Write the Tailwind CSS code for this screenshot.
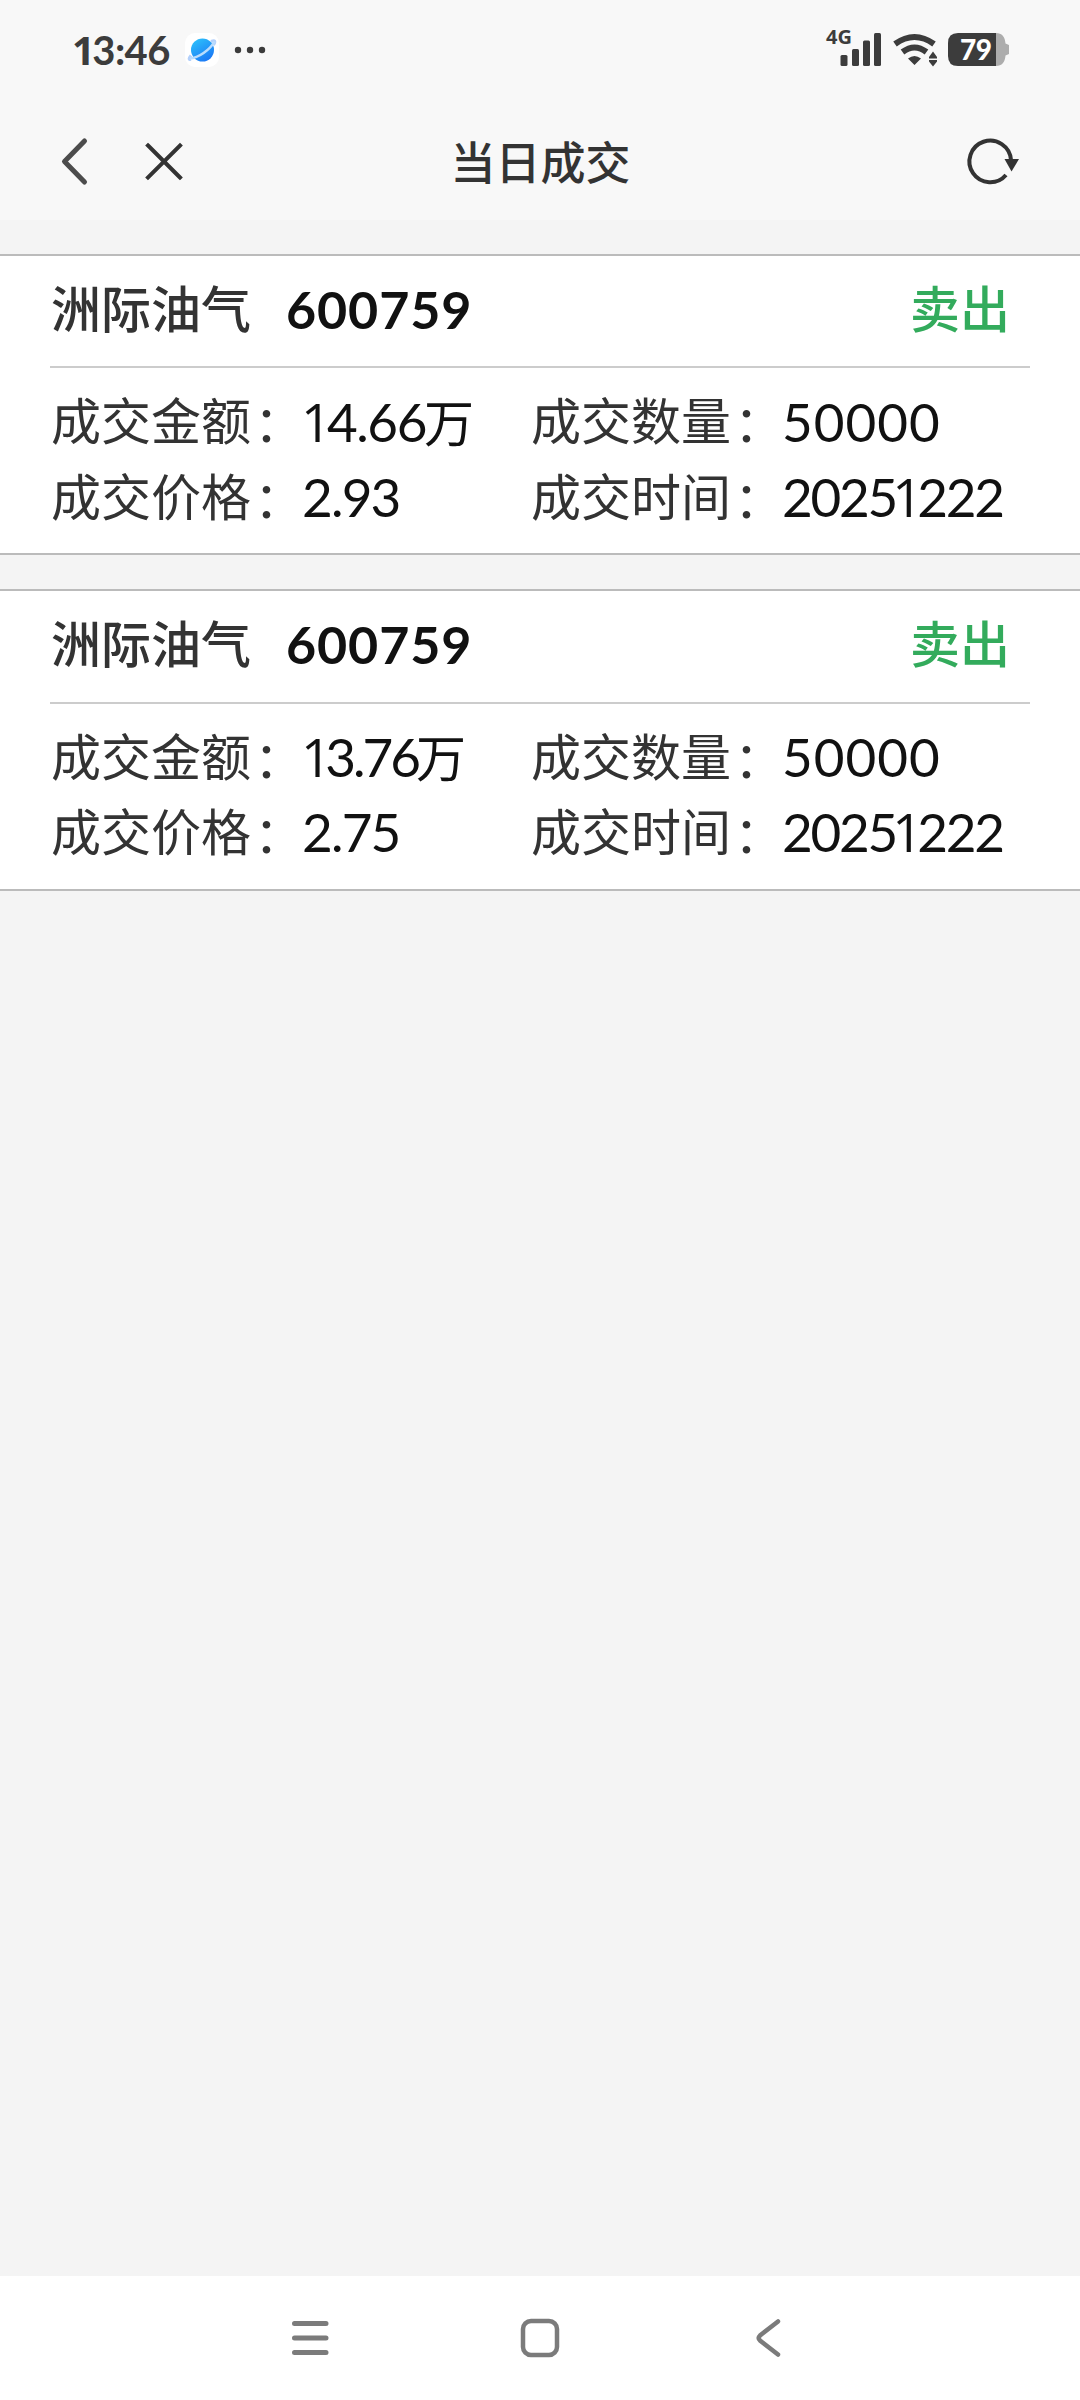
<!DOCTYPE html>
<html lang="zh-CN">
<head>
<meta charset="utf-8">
<title>当日成交</title>
<script src="https://cdn.jsdelivr.net/npm/@tailwindcss/browser@4"></script>
</head>
<body class="bg-[#f4f4f4]">
<div class="flex h-[2400px] w-[1080px] flex-col overflow-hidden bg-[#f4f4f4] font-['Lato','Noto_Sans_CJK_SC',sans-serif] text-[#333]">
  <header class="h-[220px] shrink-0 bg-[#f8f8f8]">
    <div class="flex h-[100px] items-center justify-between pl-[73px] pr-[70px]">
      <div class="flex items-center">
        <span class="-ml-px w-[113px] whitespace-nowrap text-[40px] leading-none font-bold tracking-[-0.600px] text-[#3c3c3c]"><span class="-mr-[2px] font-['Open_Sans']">1</span>3:46</span>
        <svg class="h-[34px] w-[34px]" viewBox="0 0 34 34"><defs><linearGradient id="p" x1=".2" y1="0" x2=".8" y2="1"><stop stop-color="#2cc0fb"/><stop offset="1" stop-color="#1a74f5"/></linearGradient></defs><rect width="34" height="34" rx="10" fill="#fff"/><path d="M6 22.500C3.500 25.500 3.500 27 6 26.500M26 8.500C30 7 31 8 28.500 12" fill="none" stroke="#b3d0fb" stroke-width="3"/><circle cx="17.500" cy="17" r="11.500" fill="url(#p)"/><path d="M5 25.500C13 25 25 17 29.500 8.500" fill="none" stroke="#b9dcfd" stroke-width="2.600"/></svg>
        <svg class="ml-[15px] h-[8px] w-[32px]" viewBox="0 0 32 8" fill="#3c3c3c"><circle cx="4" cy="4" r="3.200"/><circle cx="16" cy="4" r="3.200"/><circle cx="28" cy="4" r="3.200"/></svg>
      </div>
      <div class="relative -mt-[4px] h-[40px] w-[184px]">
        <span class="absolute left-0 -top-px text-[20px] leading-none font-bold text-[#3c3c3c] font-['Noto_Sans']">4G</span>
        <svg class="h-[40px] w-[184px]" viewBox="826 28 184 40" fill="#3c3c3c"><rect x="840.500" y="55" width="7" height="11" rx="1.500"/><rect x="852" y="49" width="7" height="17" rx="1.500"/><rect x="863" y="40.500" width="7" height="25.500" rx="1.500"/><rect x="874" y="33" width="7" height="33" rx="1.500"/>
          <g fill="none" stroke="#3c3c3c" stroke-width="6"><path d="M895 44Q914.500 30 934 44"/><path d="M902.500 52Q914.500 43 926.500 52"/></g><path d="M908 58.500Q914.500 53.500 921 58.500L914.500 65ZM933 51.500L937 57V58.500H929V57ZM929 60H937V61.500L933 66.500L929 61.500Z"/>
          <path d="M996 33C1002 33 1005 37 1005.500 43.500L1009 45V54L1005.500 55.500C1005 62 1002 66 996 66Z" fill="#adadad"/><path d="M958 33H996V66H958Q948 66 948 56V43Q948 33 958 33Z"/></svg>
        <span class="absolute left-[134px] top-[7px] text-[28px] leading-none font-black tracking-[-0.500px] text-white">79</span>
      </div>
    </div>
    <div class="flex h-[120px] items-center justify-between pl-[58px] pr-[60px]">
      <svg class="mt-[2px] h-[50px] w-[130px]" viewBox="58 136 130 50" fill="none" stroke-linecap="round"><path d="M84.500 141L64.500 161.500L84.500 182" stroke="#4c4c4c" stroke-width="5" stroke-linejoin="round"/><path d="M148 145.500L180 177.500M180 145.500L148 177.500" stroke="#333" stroke-width="4" stroke-linecap="square"/></svg>
      <h1 class="mr-[71px] flex-1 pt-[6px] text-center text-[45px] leading-none font-medium text-[#333]">当日成交</h1>
      <svg class="mt-[2px] h-[50px] w-[56px]" viewBox="964 136 56 50"><path d="M1011 160A20.800 20.800 0 1 0 1006 175" fill="none" stroke="#333" stroke-width="4"/><path d="M1004.500 159H1019L1011.500 171.500Z" fill="#333"/></svg>
    </div>
  </header>

  <main class="flex flex-1 flex-col gap-[34px] pt-[34px]">
    <section class="h-[301px] border-y-2 border-[#bbb] bg-white px-[50px]">
      <div class="flex h-[112px] items-center justify-between border-b-2 border-[#ccc] pl-px pr-[20px] pb-[4px] text-[50px] leading-none font-medium">
        <div class="flex items-center"><span>洲际油气</span><span class="ml-[35px] text-[52px] font-bold tracking-[0.900px] text-[#111]">600759</span></div>
        <span class="text-[#33ab5c]">卖出</span>
      </div>
      <div class="grid grid-cols-[480px_1fr] auto-rows-[76px] items-center whitespace-nowrap pl-px pt-[15px] text-[50px] leading-none">
        <div class="flex items-center"><span class="flex w-[250px]">成交金额<span class="translate-x-[3px] translate-y-[2px]">：</span></span><span class="text-[#111]"><span class="text-[53px] tracking-[-1.400px]"><span class="-mr-[3px] font-['Open_Sans']">1</span>4.66</span><span class="-ml-[2px]">万</span></span></div>
        <div class="flex items-center"><span class="flex w-[251px]">成交数量<span class="translate-x-[3px] translate-y-[2px]">：</span></span><span class="text-[53px] tracking-[1px] text-[#111]">50000</span></div>
        <div class="flex items-center"><span class="flex w-[251px]">成交价格<span class="translate-x-[3px] translate-y-[2px]">：</span></span><span class="pb-[2px] text-[53px] tracking-[-1.800px] text-[#111]">2.93</span></div>
        <div class="flex items-center"><span class="flex w-[251px]">成交时间<span class="translate-x-[3px] translate-y-[2px]">：</span></span><span class="pb-[2px] text-[53px] tracking-[-2.200px] text-[#111]">2025<span class="-mr-[3px] -ml-[4px] font-['Open_Sans']">1</span>222</span></div>
      </div>
    </section>

    <section class="h-[302px] border-y-2 border-[#bbb] bg-white px-[50px]">
      <div class="flex h-[113px] items-center justify-between border-b-2 border-[#ccc] pl-px pr-[20px] pb-[5px] text-[50px] leading-none font-medium">
        <div class="flex items-center"><span>洲际油气</span><span class="ml-[35px] text-[52px] font-bold tracking-[0.900px] text-[#111]">600759</span></div>
        <span class="text-[#33ab5c]">卖出</span>
      </div>
      <div class="grid grid-cols-[480px_1fr] auto-rows-[75px] items-center whitespace-nowrap pl-px pt-[15px] text-[50px] leading-none">
        <div class="flex items-center"><span class="flex w-[250px]">成交金额<span class="translate-x-[3px] translate-y-[2px]">：</span></span><span class="text-[#111]"><span class="text-[53px] tracking-[-3px]"><span class="-mr-[3px] font-['Open_Sans']">1</span>3.76</span><span class="-ml-[2px]">万</span></span></div>
        <div class="flex items-center"><span class="flex w-[251px]">成交数量<span class="translate-x-[3px] translate-y-[2px]">：</span></span><span class="text-[53px] tracking-[1px] text-[#111]">50000</span></div>
        <div class="flex items-center"><span class="flex w-[251px]">成交价格<span class="translate-x-[3px] translate-y-[2px]">：</span></span><span class="text-[53px] tracking-[-1.800px] text-[#111]">2.75</span></div>
        <div class="flex items-center"><span class="flex w-[251px]">成交时间<span class="translate-x-[3px] translate-y-[2px]">：</span></span><span class="text-[53px] tracking-[-2.200px] text-[#111]">2025<span class="-mr-[3px] -ml-[4px] font-['Open_Sans']">1</span>222</span></div>
      </div>
    </section>
  </main>

  <nav class="flex h-[124px] shrink-0 justify-center gap-[190px] bg-white pt-[42px]">
    <svg class="h-[40px] w-[40px]" viewBox="290 2318 40 40" stroke="#7b7b7b" stroke-width="5" stroke-linecap="round"><path d="M294.500 2323.500H326M294.500 2338H326M294.500 2352.500H326"/></svg>
    <svg class="h-[40px] w-[40px]" viewBox="520 2318 40 40"><rect x="523" y="2321" width="34" height="34" rx="8" fill="none" stroke="#7b7b7b" stroke-width="4.500"/></svg>
    <svg class="h-[40px] w-[40px]" viewBox="750 2318 40 40"><path d="M778 2321.500L760 2335.500Q757.500 2338 760 2340.500L778 2354.500" fill="none" stroke="#7b7b7b" stroke-width="4.500" stroke-linecap="round"/></svg>
  </nav>
</div>
</body>
</html>
